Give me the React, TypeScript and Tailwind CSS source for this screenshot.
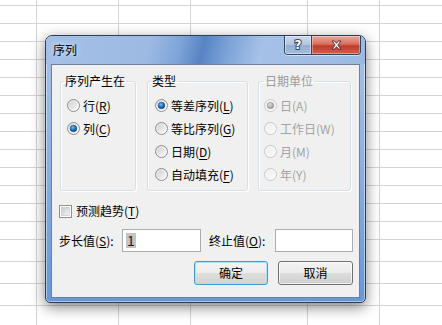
import { useId } from 'react';

const rowHeights = ['h-[6px]', ...Array(13).fill('h-[18px]'), 'h-[22px]', 'h-[22px]', 'h-[22px]'];
const colWidths = ['w-[37px]', 'w-[82px]', 'w-[72px]', 'w-[117px]', 'w-[72px]'];

const GridRow = ({ h }: { h: string }) => (
  <div className={`flex shrink-0 border-b border-[#d4d4d4] ${h}`}>
    {colWidths.map((w, i) => (
      <div key={i} className={`${w} shrink-0 border-r border-[#d4d4d4]`} />
    ))}
    <div className="flex-1" />
  </div>
);

const Radio = ({ checked, disabled }: { checked?: boolean; disabled?: boolean }) => {
  const id = useId().replace(/[^a-zA-Z0-9]/g, '');
  return (
    <svg width="13" height="13" viewBox="0 0 13 13" className="shrink-0">
      <defs>
        <linearGradient id={`${id}f`} x1="0" y1="0" x2="1" y2="1">
          <stop offset="0" stopColor={disabled ? '#ececec' : '#c9c9c9'} />
          <stop offset="1" stopColor={disabled ? '#fbfbfb' : '#ffffff'} />
        </linearGradient>
        <radialGradient id={`${id}d`} cx="0.4" cy="0.35" r="0.7">
          <stop offset="0" stopColor={disabled ? '#e0e0e0' : '#6cc2f5'} />
          <stop offset="0.55" stopColor={disabled ? '#b4b4b4' : '#1f6fb8'} />
          <stop offset="1" stopColor={disabled ? '#8c8c8c' : '#0b3a70'} />
        </radialGradient>
      </defs>
      <circle cx="6.5" cy="6.5" r="6" fill={`url(#${id}f)`} stroke={disabled ? '#c8c8c8' : '#8e8f8f'} />
      <circle cx="6.5" cy="6.5" r="4.6" fill="none" stroke="#ffffff" strokeOpacity="0.55" />
      {checked && <circle cx="6.5" cy="6.5" r="3.3" fill={`url(#${id}d)`} stroke={disabled ? '#9a9a9a' : '#1b4f86'} strokeWidth="0.6" />}
    </svg>
  );
};

const Checkbox = () => {
  const id = useId().replace(/[^a-zA-Z0-9]/g, '');
  return (
    <svg width="13" height="13" viewBox="0 0 13 13" className="shrink-0">
      <defs>
        <linearGradient id={`${id}c`} x1="0" y1="0" x2="1" y2="1">
          <stop offset="0" stopColor="#c4c8ce" />
          <stop offset="1" stopColor="#f7f7f7" />
        </linearGradient>
      </defs>
      <rect x="0.5" y="0.5" width="12" height="12" fill="#ffffff" stroke="#8e8f8f" />
      <rect x="2.5" y="2.5" width="8" height="8" fill={`url(#${id}c)`} stroke="#b9bdc3" strokeWidth="0.6" />
    </svg>
  );
};

// disabled items show the access key without underline
const Label = ({ text, k, disabled }: { text: string; k: string; disabled?: boolean }) => (
  <span className={`whitespace-nowrap leading-[16px] ${disabled ? 'text-[#a3a3a3]' : 'text-black'}`}>
    {text}({disabled ? k : <u className="underline-offset-[2px]">{k}</u>})
  </span>
);

const Option = ({ text, k, checked, disabled }: { text: string; k: string; checked?: boolean; disabled?: boolean }) => (
  <div className="flex h-[23px] items-center gap-[3px]">
    <Radio checked={checked} disabled={disabled} />
    <Label text={text} k={k} disabled={disabled} />
  </div>
);

const groupBox = 'h-[118px] shrink-0 rounded-[3px] border border-[#d5dfe5] p-0 shadow-[inset_1px_1px_0_#ffffff,1px_1px_0_#ffffff]';

export default function App() {
  return (
    <div className="relative h-[325px] w-[442px] overflow-hidden bg-white font-['Microsoft_YaHei','Noto_Sans_CJK_SC',sans-serif] text-[12px]">
      {/* spreadsheet grid */}
      <div className="flex h-full flex-col">
        {rowHeights.map((h, i) => (
          <GridRow key={i} h={h} />
        ))}
        <div className="flex flex-1">
          {colWidths.map((w, i) => (
            <div key={i} className={`${w} shrink-0 border-r border-[#d4d4d4]`} />
          ))}
        </div>
      </div>

      {/* dialog */}
      <div className="absolute left-[45px] top-[35px] flex h-[268px] w-[321px] flex-col rounded-t-[7px] rounded-b-[5px] border border-[#2f3d52] bg-[linear-gradient(180deg,#a9c3e7_0%,#8fb1df_45%,#6797d6_100%)] px-[5px] pb-[4px] shadow-[0_4px_14px_rgba(0,0,0,0.5),inset_0_0_0_1px_rgba(255,255,255,0.45)]">
        {/* title bar */}
        <div className="-mx-[5px] flex h-[28px] shrink-0 items-start rounded-t-[6px] bg-[linear-gradient(104deg,#a4c0e6_0%,#9dbae3_32%,#7ea4d8_42%,#5884c3_49%,#7ea4d8_57%,#a6c1e6_67%,#9cb9e2_100%)] pl-[7px] pr-[4px]">
          <span className="mt-[6px] leading-[16px] text-black [text-shadow:0_0_6px_rgba(255,255,255,0.9)]">序列</span>
          <div className="ml-auto flex h-[19px] overflow-hidden rounded-b-[4px] border border-t-0 border-[#34465f] shadow-[0_1px_0_rgba(255,255,255,0.5)]">
            <div className="flex w-[27px] items-center justify-center border-r border-[#34465f] bg-[linear-gradient(180deg,#c9d8ed_0%,#b2c6e2_48%,#94aed2_52%,#a3bcdd_100%)] shadow-[inset_0_0_0_1px_rgba(255,255,255,0.45)]">
              <span className="font-['DejaVu_Sans',sans-serif] text-[12px] font-bold leading-none text-white [paint-order:stroke] [-webkit-text-stroke:2px_#33465f]">?</span>
            </div>
            <div className="flex w-[48px] items-center justify-center bg-[linear-gradient(180deg,#e9a89b_0%,#d8705f_45%,#c23a28_55%,#d0604c_100%)] shadow-[inset_0_0_0_1px_rgba(255,255,255,0.35)]">
              <svg width="11" height="10" viewBox="0 0 11 10">
                <path d="M1 1h2.6l1.9 2.3L7.4 1H10L6.8 5 10 9H7.4L5.5 6.7 3.6 9H1l3.2-4z" fill="#ffffff" stroke="#3b2a2a" strokeWidth="0.9" strokeLinejoin="round" />
              </svg>
            </div>
          </div>
        </div>

        {/* client area */}
        <div className="flex flex-1 flex-col border border-[#6c819f] bg-[#f0f0f0] pt-[8px] text-black">
          <div className="flex pl-[8px]">
            <fieldset className={`${groupBox} w-[76px]`}>
              <legend className="ml-[3px] px-[1px] leading-[16px]">序列产生在</legend>
              <div className="flex flex-col pl-[6px] pt-[5px]">
                <Option text="行" k="R" />
                <Option text="列" k="C" checked />
              </div>
            </fieldset>
            <fieldset className={`${groupBox} ml-[11px] w-[101px]`}>
              <legend className="ml-[3px] px-[1px] leading-[16px]">类型</legend>
              <div className="flex flex-col pl-[7px] pt-[5px]">
                <Option text="等差序列" k="L" checked />
                <Option text="等比序列" k="G" />
                <Option text="日期" k="D" />
                <Option text="自动填充" k="F" />
              </div>
            </fieldset>
            <fieldset className={`${groupBox} ml-[10px] w-[93px]`}>
              <legend className="ml-[5px] px-[1px] leading-[16px] text-[#9a9a9a]">日期单位</legend>
              <div className="flex flex-col pl-[5px] pt-[5px]">
                <Option text="日" k="A" checked disabled />
                <Option text="工作日" k="W" disabled />
                <Option text="月" k="M" disabled />
                <Option text="年" k="Y" disabled />
              </div>
            </fieldset>
          </div>

          <div className="mt-[12px] flex h-[16px] items-center gap-[4px] pl-[7px]">
            <Checkbox />
            <Label text="预测趋势" k="T" />
          </div>

          <div className="mt-[10px] flex h-[23px] items-center pl-[7px]">
            <span className="w-[63px] shrink-0 whitespace-nowrap leading-[16px]">
              步长值(<u>S</u>):
            </span>
            <div className="flex h-[23px] w-[79px] shrink-0 items-center border border-[#abadb3] bg-white pl-[3px]">
              <span className="bg-[#c4c4c4] px-[1px] text-[14px] leading-[15px] text-[#1a1a1a]">1</span>
            </div>
            <span className="ml-[8px] w-[66px] shrink-0 whitespace-nowrap leading-[16px]">
              终止值(<u>O</u>):
            </span>
            <div className="h-[23px] w-[78px] shrink-0 border border-[#abadb3] bg-white" />
          </div>

          <div className="mt-[9px] flex justify-end gap-[10px] pr-[6px]">
            <button className="flex h-[24px] w-[74px] items-center justify-center rounded-[3px] border border-[#3c9bd8] bg-[linear-gradient(180deg,#f4f4f4_0%,#ececec_48%,#dedede_52%,#d2d2d2_100%)] leading-[16px] shadow-[inset_0_0_0_1px_#a8e2fb]">
              确定
            </button>
            <button className="flex h-[24px] w-[75px] items-center justify-center rounded-[3px] border border-[#707070] bg-[linear-gradient(180deg,#f2f2f2_0%,#ebebeb_48%,#dddddd_52%,#cfcfcf_100%)] leading-[16px] shadow-[inset_0_0_0_1px_rgba(255,255,255,0.7)]">
              取消
            </button>
          </div>
        </div>
      </div>
    </div>
  );
}
